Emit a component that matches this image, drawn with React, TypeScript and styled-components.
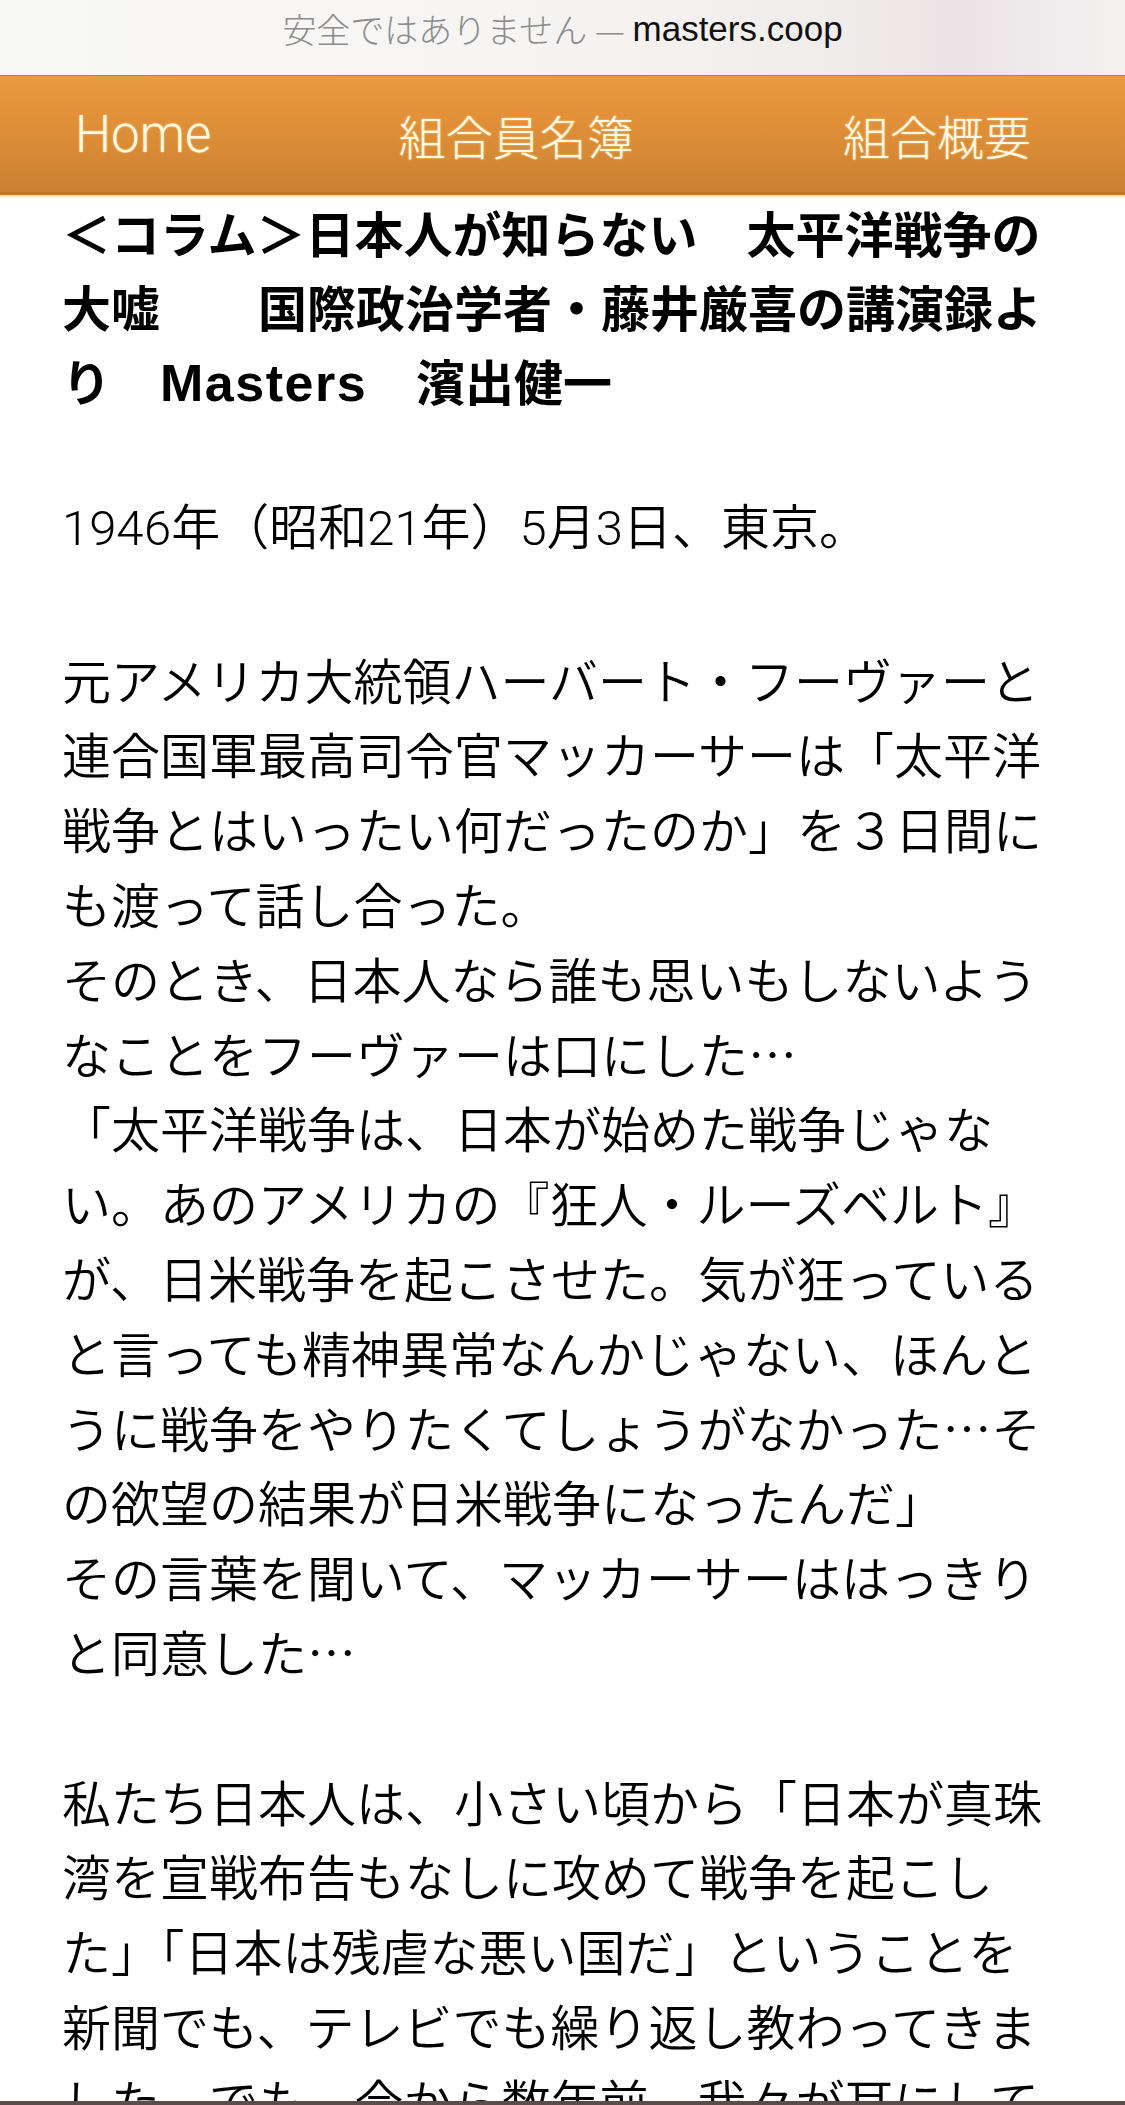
import React from "react";
import styled, { createGlobalStyle } from "styled-components";

const GlobalStyle = createGlobalStyle`
  html, body {
    margin: 0;
    padding: 0;
    background: #ffffff;
  }
  body {
    font-family: "Noto Sans CJK JP", "Noto Sans", sans-serif;
    -webkit-font-smoothing: antialiased;
  }
`;

const Page = styled.div`
  position: relative;
  height: 2105px;
  overflow: hidden;
  background: #ffffff;
`;

const AddressBar = styled.div`
  height: 75px;
  display: flex;
  align-items: center;
  justify-content: center;
  padding-bottom: 18px;
  box-sizing: border-box;
  background: linear-gradient(90deg, #f8f8f7 0%, #f7f5f3 45%, #f1ecec 75%, #ebe4e6 85%, #f4f1f1 100%);
  font-size: 34px;
  white-space: pre;
`;

const Insecure = styled.span`
  color: #8c8c8c;
  font-family: "Noto Sans CJK JP", sans-serif;
  font-weight: 300;
`;

const Domain = styled.span`
  color: #111111;
  font-family: "Liberation Sans", "Noto Sans", sans-serif;
  font-size: 35px;
`;

const NavBar = styled.nav`
  height: 120px;
  box-sizing: border-box;
  display: flex;
  align-items: center;
  justify-content: space-between;
  padding: 0 94px 0 75px;
  background: linear-gradient(180deg, #eb9a3d 0%, #e4913a 30%, #d88a35 65%, #c98031 100%);
  border-top: 1px solid #c47d30;
  border-bottom: 3px solid #b9782c;
  box-shadow: 0 2px 0 #f7e6c8;
`;

const NavItem = styled.a<{ $latin?: boolean; $shift?: number }>`
  color: #fff8e2;
  text-decoration: none;
  font-family: ${(p) =>
    p.$latin ? `"Roboto", "Liberation Sans", sans-serif` : `"Noto Sans CJK JP", sans-serif`};
  font-size: ${(p) => (p.$latin ? "51px" : "47px")};
  font-weight: 300;
  line-height: 1;
  margin-right: ${(p) => p.$shift ?? 0}px;
  text-shadow: 0 0 2px rgba(255, 225, 150, 0.9);
`;

const Article = styled.article`
  padding: 0 62px;
  color: #000000;
`;

const Title = styled.h1`
  margin: 0 0 72px;
  font-size: 49px;
  font-weight: 700;
  line-height: 74px;
  font-family: "Noto Sans CJK JP", sans-serif;
`;

const TitleLatin = styled.span`
  font-family: "Liberation Sans", "Noto Sans", sans-serif;
  font-size: 52px;
  letter-spacing: 1.5px;
`;

const Paragraph = styled.p<{ $latinDigits?: boolean }>`
  margin: 0 0 74.8px;
  font-family: ${(p) =>
    p.$latinDigits ? `"Roboto", "Noto Sans CJK JP", sans-serif` : `"Noto Sans CJK JP", sans-serif`};
  font-size: 49px;
  font-weight: 350;
  font-variant-numeric: lining-nums;
  line-height: 74.8px;
  white-space: nowrap;
`;

const Line = styled.span`
  display: block;
`;

const BottomEdge = styled.div`
  position: absolute;
  left: 0;
  right: 0;
  bottom: 0;
  height: 4px;
  background: #5e4c46;
`;

const paragraphs: string[][] = [
  ["1946年（昭和21年）5月3日、東京。"],
  [
    "元アメリカ大統領ハーバート・フーヴァーと",
    "連合国軍最高司令官マッカーサーは「太平洋",
    "戦争とはいったい何だったのか」を３日間に",
    "も渡って話し合った。",
    "そのとき、日本人なら誰も思いもしないよう",
    "なことをフーヴァーは口にした…",
    "「太平洋戦争は、日本が始めた戦争じゃな",
    "い。あのアメリカの『狂人・ルーズベルト』",
    "が、日米戦争を起こさせた。気が狂っている",
    "と言っても精神異常なんかじゃない、ほんと",
    "うに戦争をやりたくてしょうがなかった…そ",
    "の欲望の結果が日米戦争になったんだ」",
    "その言葉を聞いて、マッカーサーははっきり",
    "と同意した…",
  ],
  [
    "私たち日本人は、小さい頃から「日本が真珠",
    "湾を宣戦布告もなしに攻めて戦争を起こし",
    "た」「日本は残虐な悪い国だ」ということを",
    "新聞でも、テレビでも繰り返し教わってきま",
    "した。でも、今から数年前、我々が耳にして",
  ],
];

const App: React.FC = () => {
  return (
    <Page>
      <GlobalStyle />
      <AddressBar>
        <Insecure>安全ではありません — </Insecure>
        <Domain>masters.coop</Domain>
      </AddressBar>

      <NavBar>
        <NavItem href="#" $latin>
          Home
        </NavItem>
        <NavItem href="#" $shift={22}>
          組合員名簿
        </NavItem>
        <NavItem href="#">組合概要</NavItem>
      </NavBar>

      <Article>
        <Title>
          ＜コラム＞日本人が知らない　太平洋戦争の
          <br />
          大嘘　　国際政治学者・藤井厳喜の講演録よ
          <br />
          り　<TitleLatin>Masters</TitleLatin>　濱出健一
        </Title>

        {paragraphs.map((lines, i) => (
          <Paragraph key={i} $latinDigits={i === 0}>
            {lines.map((line, j) => (
              <Line key={j}>{line}</Line>
            ))}
          </Paragraph>
        ))}
      </Article>

      <BottomEdge />
    </Page>
  );
};

export default App;
